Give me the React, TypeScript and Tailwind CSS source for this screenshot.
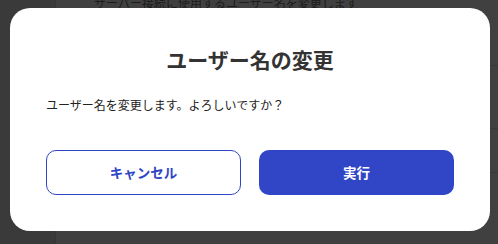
import React from "react";

export default function App() {
  const font = { fontFamily: '"Noto Sans CJK JP", "Noto Sans", sans-serif' };
  return (
    <div className="relative w-[498px] h-[244px] overflow-hidden bg-[#404040]" style={font}>
      <div className="flex h-full">
        <div className="w-[56px] h-full bg-[#3a3a3a] border-r border-[#363636]" />
        <div className="flex-1 flex flex-col">
          <p className="mt-[-6px] ml-[38px] text-[12px] leading-[18px] text-[#1c1c1c]">
            サーバー接続に使用するユーザー名を変更します
          </p>
          <div className="mt-[53px] h-px bg-[#383838]" />
          <div className="mt-[62px] h-px bg-[#383838]" />
          <div className="mt-[43px] h-px bg-[#383838]" />
        </div>
      </div>

      <div className="absolute left-[10px] top-[8px] w-[480px] h-[223px] bg-white rounded-[20px] px-[36px] pt-[37px] flex flex-col">
        <h2 className="text-center text-[21px] leading-[29px] font-bold text-[#333333]">
          ユーザー名の変更
        </h2>
        <p className="mt-[22px] text-[12px] leading-[18px] text-[#222222]">
          ユーザー名を変更します。よろしいですか？
        </p>
        <div className="mt-[36px] flex gap-[18px]">
          <button className="w-[195px] h-[45px] rounded-[10px] border border-[#3146c6] bg-white text-[#3146c6] text-[13.5px] font-bold flex items-center justify-center">
            キャンセル
          </button>
          <button className="w-[195px] h-[45px] rounded-[10px] bg-[#3146c6] text-white text-[13.5px] font-bold flex items-center justify-center">
            実行
          </button>
        </div>
      </div>
    </div>
  );
}
